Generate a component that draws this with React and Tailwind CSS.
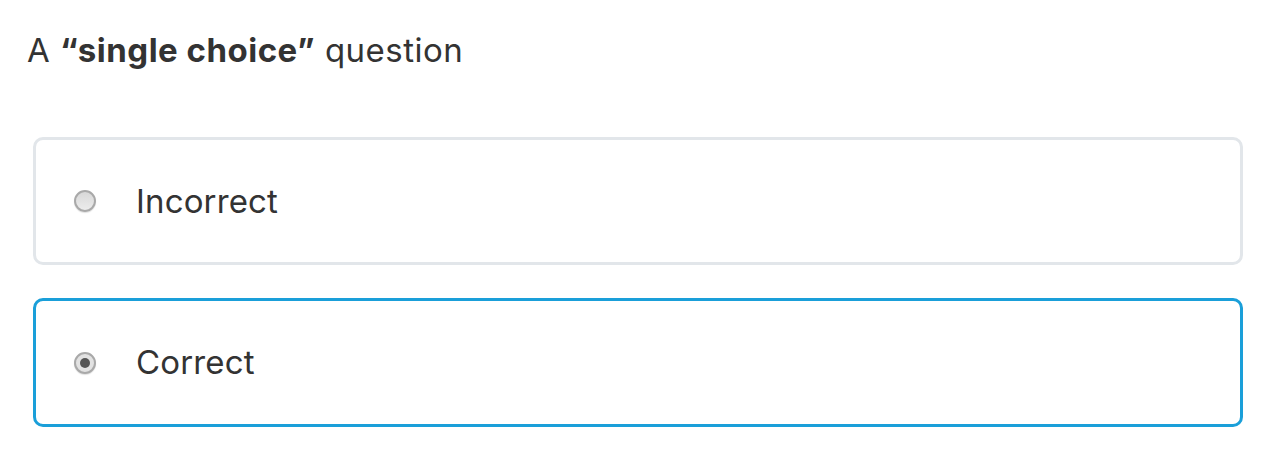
export default function App() {
  const font = { fontFamily: 'Inter, "Noto Sans", sans-serif' };
  return (
    <div className="w-[1268px] h-[458px] bg-white text-[#333333] pl-[33px] pr-[25px]" style={font}>
      <div className="pt-[27px] h-[137px] text-[33px] leading-[46px] -ml-[6px] tracking-[0.5px]">
        A <span className="font-bold">“single choice”</span> question
      </div>
      <div className="flex flex-col gap-[33px]">
        <div className="h-[128px] rounded-[10px] border-[3px] border-[#e2e6ea] flex items-center pl-[38px]">
          <span className="w-[22px] h-[22px] rounded-full border-[2px] border-[#a9a9a9] bg-gradient-to-b from-[#d8d8d8] to-[#ececec] shadow-[0_1px_1px_rgba(0,0,0,0.12)]" />
          <span className="ml-[40px] text-[33px] leading-none tracking-[0.15px]">Incorrect</span>
        </div>
        <div className="h-[129px] rounded-[10px] border-[3px] border-[#1a9fd9] flex items-center pl-[38px]">
          <span className="w-[22px] h-[22px] rounded-full border-[2px] border-[#a9a9a9] bg-[#e2e2e2] flex items-center justify-center shadow-[0_1px_1px_rgba(0,0,0,0.12)]">
            <span className="w-[10px] h-[10px] rounded-full bg-[#555555]" />
          </span>
          <span className="ml-[40px] text-[33px] leading-none tracking-[0.15px]">Correct</span>
        </div>
      </div>
    </div>
  );
}
